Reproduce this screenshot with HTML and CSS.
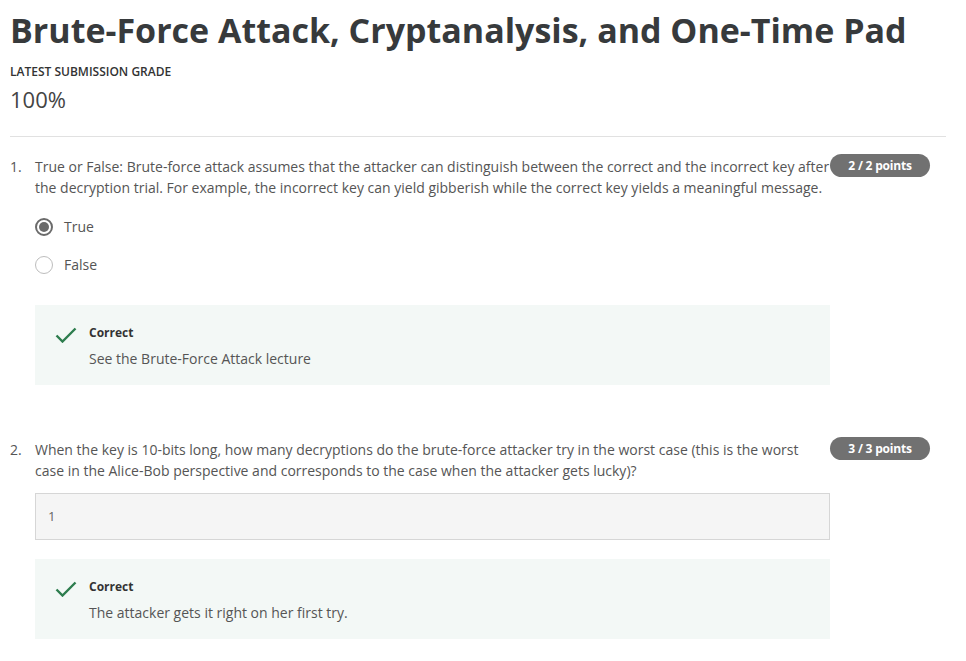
FILE: index.html
```html
<!DOCTYPE html>
<html lang="en">
<head>
<meta charset="utf-8">
<title>Quiz</title>
<link rel="stylesheet" href="styles.css">
</head>
<body>
<div class="page">
  <h1 class="title">Brute-Force Attack, Cryptanalysis, and One-Time Pad</h1>
  <div class="grade-label">LATEST SUBMISSION GRADE</div>
  <div class="grade-value">100%</div>
  <hr class="divider">

  <div class="question q1">
    <div class="qnum">1.</div>
    <div class="qbody">
      <div class="qtext">True or False: Brute-force attack assumes that the attacker can distinguish between the correct and the incorrect key after the decryption trial. For example, the incorrect key can yield gibberish while the correct key yields a meaningful message.</div>
      <div class="options">
        <div class="option"><span class="radio checked"></span><span>True</span></div>
        <div class="option"><span class="radio"></span><span>False</span></div>
      </div>
      <div class="feedback">
        <svg class="check" width="22" height="16" viewBox="0 0 22 16"><path d="M1.5 8.5 L7.5 14.5 L20.5 1.5" fill="none" stroke="#2d7d4e" stroke-width="2.4"/></svg>
        <div class="fb-text">
          <div class="fb-title">Correct</div>
          <div class="fb-msg">See the Brute-Force Attack lecture</div>
        </div>
      </div>
    </div>
    <div class="badge">2 / 2 points</div>
  </div>

  <div class="question q2">
    <div class="qnum">2.</div>
    <div class="qbody">
      <div class="qtext">When the key is 10-bits long, how many decryptions do the brute-force attacker try in the worst case (this is the worst case in the Alice-Bob perspective and corresponds to the case when the attacker gets lucky)?</div>
      <div class="answer-box">1</div>
      <div class="feedback">
        <svg class="check" width="22" height="16" viewBox="0 0 22 16"><path d="M1.5 8.5 L7.5 14.5 L20.5 1.5" fill="none" stroke="#2d7d4e" stroke-width="2.4"/></svg>
        <div class="fb-text">
          <div class="fb-title">Correct</div>
          <div class="fb-msg">The attacker gets it right on her first try.</div>
        </div>
      </div>
    </div>
    <div class="badge">3 / 3 points</div>
  </div>
</div>
</body>
</html>
```

FILE: styles.css
```css
html, body {
  margin: 0;
  padding: 0;
  background: #ffffff;
}

body {
  font-family: "Open Sans", "Noto Sans", sans-serif;
  color: #555555;
}

.page {
  width: 936px;
  padding: 0 20px 0 10px;
}

.title {
  margin: 0;
  padding-top: 8px;
  font-size: 34px;
  line-height: 44px;
  font-weight: 700;
  color: #373a3c;
  letter-spacing: 0;
  white-space: nowrap;
}

.grade-label {
  margin-top: 12px;
  font-size: 12px;
  line-height: 16px;
  font-weight: 600;
  color: #333333;
}

.grade-value {
  margin-top: 4px;
  font-size: 22px;
  line-height: 30px;
  font-weight: 400;
  color: #444444;
}

.divider {
  margin: 22px 0 0 0;
  border: 0;
  border-top: 1px solid #e1e1e1;
  height: 0;
}

.question {
  display: flex;
  align-items: flex-start;
  font-size: 14px;
  line-height: 21px;
}

.q1 {
  margin-top: 19px;
}

.q2 {
  margin-top: 54px;
}

.qnum {
  width: 25px;
  flex: none;
}

.qbody {
  width: 795px;
  flex: none;
}

.qtext {
  color: #555555;
}

.badge {
  flex: none;
  width: 100px;
  height: 23px;
  margin-top: -2px;
  border-radius: 12px;
  background: #717171;
  color: #ffffff;
  font-size: 12px;
  font-weight: 700;
  line-height: 23px;
  text-align: center;
  letter-spacing: -0.2px;
}

.options {
  margin-top: 18px;
  display: flex;
  flex-direction: column;
  gap: 17px;
}

.option {
  display: flex;
  align-items: center;
  height: 21px;
}

.radio {
  box-sizing: border-box;
  width: 18px;
  height: 18px;
  margin-right: 11px;
  border-radius: 50%;
  border: 1.5px solid #bdbdbd;
  background: #ffffff;
  position: relative;
}

.radio.checked {
  border: 2px solid #6b6b6b;
}

.radio.checked::after {
  content: "";
  position: absolute;
  left: 2px;
  top: 2px;
  width: 10px;
  height: 10px;
  border-radius: 50%;
  background: #6b6b6b;
}

.feedback {
  margin-top: 30px;
  height: 80px;
  box-sizing: border-box;
  background: #f3f8f6;
  display: flex;
  align-items: flex-start;
  padding: 20px 0 0 20px;
}

.check {
  flex: none;
  margin-top: 2px;
  margin-right: 12px;
}

.fb-title {
  font-size: 12px;
  line-height: 16px;
  font-weight: 700;
  color: #333333;
}

.fb-msg {
  margin-top: 7px;
  font-size: 14px;
  line-height: 21px;
  color: #555555;
}

.answer-box {
  margin-top: 12px;
  height: 47px;
  box-sizing: border-box;
  border: 1px solid #d6d6d6;
  background: #f5f5f5;
  padding: 12px 12px;
  font-size: 13px;
  line-height: 21px;
  color: #666666;
}

.q2 .feedback {
  margin-top: 19px;
}
```
